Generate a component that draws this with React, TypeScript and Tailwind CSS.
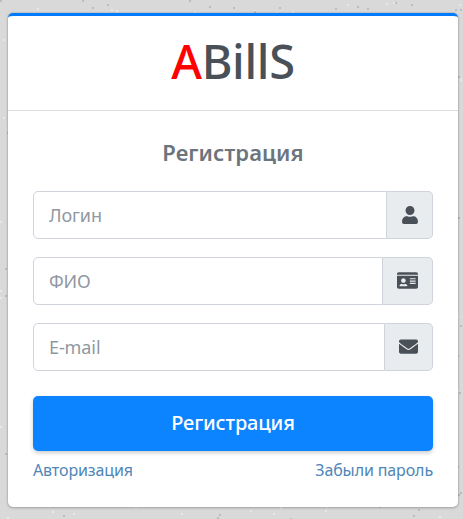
import React from 'react';
import { FaUser, FaIdCard, FaEnvelope } from 'react-icons/fa';

// small seeded generator so the speckles stay the same on every load
const speckles = Array.from({ length: 900 }, (_, i) => {
  const a = Math.sin(i * 12.9898) * 43758.5453;
  const b = Math.sin(i * 78.233) * 24634.6345;
  const c = Math.sin(i * 37.719) * 9631.123;
  return {
    x: Math.floor((a - Math.floor(a)) * 463),
    y: Math.floor((b - Math.floor(b)) * 519),
    light: c - Math.floor(c) > 0.5,
  };
});

const fields = [
  { placeholder: 'Логин', icon: <FaUser />, addon: 'w-[46px]' },
  { placeholder: 'ФИО', icon: <FaIdCard className="text-[21px]" />, addon: 'w-[50px]' },
  { placeholder: 'E-mail', icon: <FaEnvelope className="text-[19px]" />, addon: 'w-[48px]' },
];

const App: React.FC = () => {
  return (
    <div className="relative h-[519px] w-[463px] overflow-hidden bg-[#d9d9d9] pt-[13px] pl-2 font-['Noto_Sans',sans-serif]">
      <svg className="absolute inset-0" width="463" height="519" aria-hidden="true">
        {speckles.map((s, i) => (
          <rect key={i} x={s.x} y={s.y} width="2" height="2" fill={s.light ? '#e8e8e8' : '#bdbdbd'} />
        ))}
      </svg>

      <div className="relative h-[494px] w-[450px] rounded-[5px] border-t-[3px] border-[#007bff] bg-white shadow-[0_0_2px_rgba(0,0,0,0.25),0_1px_3px_rgba(0,0,0,0.2)]">
        <div className="flex h-[95px] items-center justify-center border-b border-[#dcdcdc] pb-[3px] text-[47px] leading-none font-medium tracking-[-0.3px] text-[#495057]">
          <span className="text-[#ff0000]">A</span>
          <span>BillS</span>
        </div>

        <div className="px-[25px]">
          <h1 className="mt-[26px] mb-[24px] text-center text-[22px] leading-[30px] font-semibold tracking-[0.1px] text-[#6c757d]">
            Регистрация
          </h1>

          <div className="flex flex-col gap-[18.5px]">
            {fields.map((f) => (
              <div key={f.placeholder} className="flex h-[47.5px]">
                <input
                  placeholder={f.placeholder}
                  className="min-w-0 flex-1 rounded-l-[5px] border border-[#ced4da] bg-white px-[15px] pt-[1px] text-[18px] tracking-[-0.1px] text-[#495057] outline-none placeholder:text-[#8f98a1]"
                />
                <div
                  className={`flex items-center justify-center rounded-r-[5px] border border-l-0 border-[#ced4da] bg-[#e9ecef] text-[18px] text-[#495057] ${f.addon}`}
                >
                  {f.icon}
                </div>
              </div>
            ))}
          </div>

          <button className="mt-[25px] flex h-[55px] w-full items-center justify-center rounded-[5px] bg-[#0d84ff] text-[20px] font-medium tracking-[-0.15px] text-white shadow-[0_2px_4px_rgba(0,0,0,0.2)]">
            Регистрация
          </button>

          <div className="mt-[7px] flex justify-between text-[16px] leading-[24px] tracking-[-0.12px] text-[#4f86b8]">
            <a href="#">Авторизация</a>
            <a href="#">Забыли пароль</a>
          </div>
        </div>
      </div>
    </div>
  );
};

export default App;
